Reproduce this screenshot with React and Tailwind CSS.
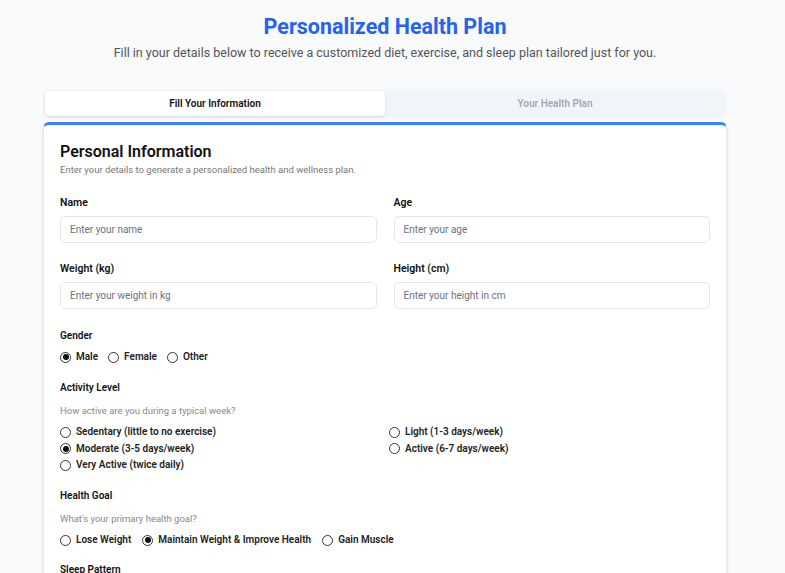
import { useState } from "react";

function Radio({ name, label, checked, onChange }) {
  return (
    <label className="flex items-center gap-[5px] h-[16px] cursor-pointer">
      <span className="w-[11px] h-[11px] rounded-full border border-[#333] flex items-center justify-center bg-white shrink-0">
        {checked && <span className="w-[6px] h-[6px] rounded-full bg-[#111]" />}
      </span>
      <input type="radio" name={name} className="hidden" checked={checked} onChange={onChange} />
      <span className="text-[10px] font-semibold text-[#222] leading-[16px]">{label}</span>
    </label>
  );
}

function Field({ label, placeholder }) {
  return (
    <div className="flex flex-col">
      <label className="text-[10.5px] font-semibold text-[#111] leading-[14px] mb-[6px]">{label}</label>
      <input
        placeholder={placeholder}
        className="h-[27px] rounded-[5px] border border-gray-200 px-[9px] text-[10px] placeholder:text-gray-500 outline-none"
      />
    </div>
  );
}

export default function App() {
  const [gender, setGender] = useState("male");
  const [activity, setActivity] = useState("moderate");
  const [goal, setGoal] = useState("maintain");

  return (
    <div
      className="min-h-screen bg-[#f8fafc] pt-[12px]"
      style={{ fontFamily: 'Roboto, "Open Sans", sans-serif' }}
    >
      <div className="w-[770px] text-center">
        <h1 className="text-[21.5px] font-bold text-[#2563eb] leading-[30px]">Personalized Health Plan</h1>
        <p className="mt-[3px] text-[12.5px] text-[#555] leading-[16px]">
          Fill in your details below to receive a customized diet, exercise, and sleep plan tailored just for you.
        </p>
      </div>

      <div className="ml-[43px] w-[684px] mt-[28px]">
        {/* Tabs */}
        <div className="bg-[#f1f5f9] rounded-[6px] p-[2px] grid grid-cols-2 h-[29px]">
          <button className="bg-white rounded-[4px] text-[10px] font-semibold text-[#111] shadow-sm">
            Fill Your Information
          </button>
          <button className="text-[10px] font-semibold text-[#a3a9b3]">Your Health Plan</button>
        </div>

        {/* Card */}
        <div className="mt-[4px] bg-white rounded-[6px] border border-gray-200 border-t-[3px] border-t-[#3b82f6] shadow-md px-[16px] pt-[16px] pb-[40px]">
          <h2 className="text-[16px] font-semibold text-[#111] leading-[22px]">Personal Information</h2>
          <p className="text-[9.5px] text-[#777] leading-[14px]">
            Enter your details to generate a personalized health and wellness plan.
          </p>

          <div className="grid grid-cols-2 gap-x-[17px] gap-y-[19px] mt-[19px]">
            <Field label="Name" placeholder="Enter your name" />
            <Field label="Age" placeholder="Enter your age" />
            <Field label="Weight (kg)" placeholder="Enter your weight in kg" />
            <Field label="Height (cm)" placeholder="Enter your height in cm" />
          </div>

          <div className="mt-[20px]">
            <div className="text-[10px] font-semibold text-[#111] leading-[14px]">Gender</div>
            <div className="flex gap-[10px] mt-[6px]">
              <Radio name="g" label="Male" checked={gender === "male"} onChange={() => setGender("male")} />
              <Radio name="g" label="Female" checked={gender === "female"} onChange={() => setGender("female")} />
              <Radio name="g" label="Other" checked={gender === "other"} onChange={() => setGender("other")} />
            </div>
          </div>

          <div className="mt-[16px]">
            <div className="text-[10px] font-semibold text-[#111] leading-[14px]">Activity Level</div>
            <p className="text-[9.5px] text-[#888] leading-[14px] mt-[9px]">How active are you during a typical week?</p>
            <div className="grid grid-cols-2 gap-x-[8px] gap-y-[0.5px] mt-[6px]">
              <Radio name="a" label="Sedentary (little to no exercise)" checked={activity === "sedentary"} onChange={() => setActivity("sedentary")} />
              <Radio name="a" label="Light (1-3 days/week)" checked={activity === "light"} onChange={() => setActivity("light")} />
              <Radio name="a" label="Moderate (3-5 days/week)" checked={activity === "moderate"} onChange={() => setActivity("moderate")} />
              <Radio name="a" label="Active (6-7 days/week)" checked={activity === "active"} onChange={() => setActivity("active")} />
              <Radio name="a" label="Very Active (twice daily)" checked={activity === "very"} onChange={() => setActivity("very")} />
            </div>
          </div>

          <div className="mt-[16px]">
            <div className="text-[10px] font-semibold text-[#111] leading-[14px]">Health Goal</div>
            <p className="text-[9.5px] text-[#888] leading-[14px] mt-[9px]">What's your primary health goal?</p>
            <div className="flex gap-[11px] mt-[6px]">
              <Radio name="h" label="Lose Weight" checked={goal === "lose"} onChange={() => setGoal("lose")} />
              <Radio name="h" label="Maintain Weight & Improve Health" checked={goal === "maintain"} onChange={() => setGoal("maintain")} />
              <Radio name="h" label="Gain Muscle" checked={goal === "gain"} onChange={() => setGoal("gain")} />
            </div>
          </div>

          <div className="mt-[15px]">
            <div className="text-[10px] font-semibold text-[#111] leading-[14px]">Sleep Pattern</div>
          </div>
        </div>
      </div>
    </div>
  );
}
